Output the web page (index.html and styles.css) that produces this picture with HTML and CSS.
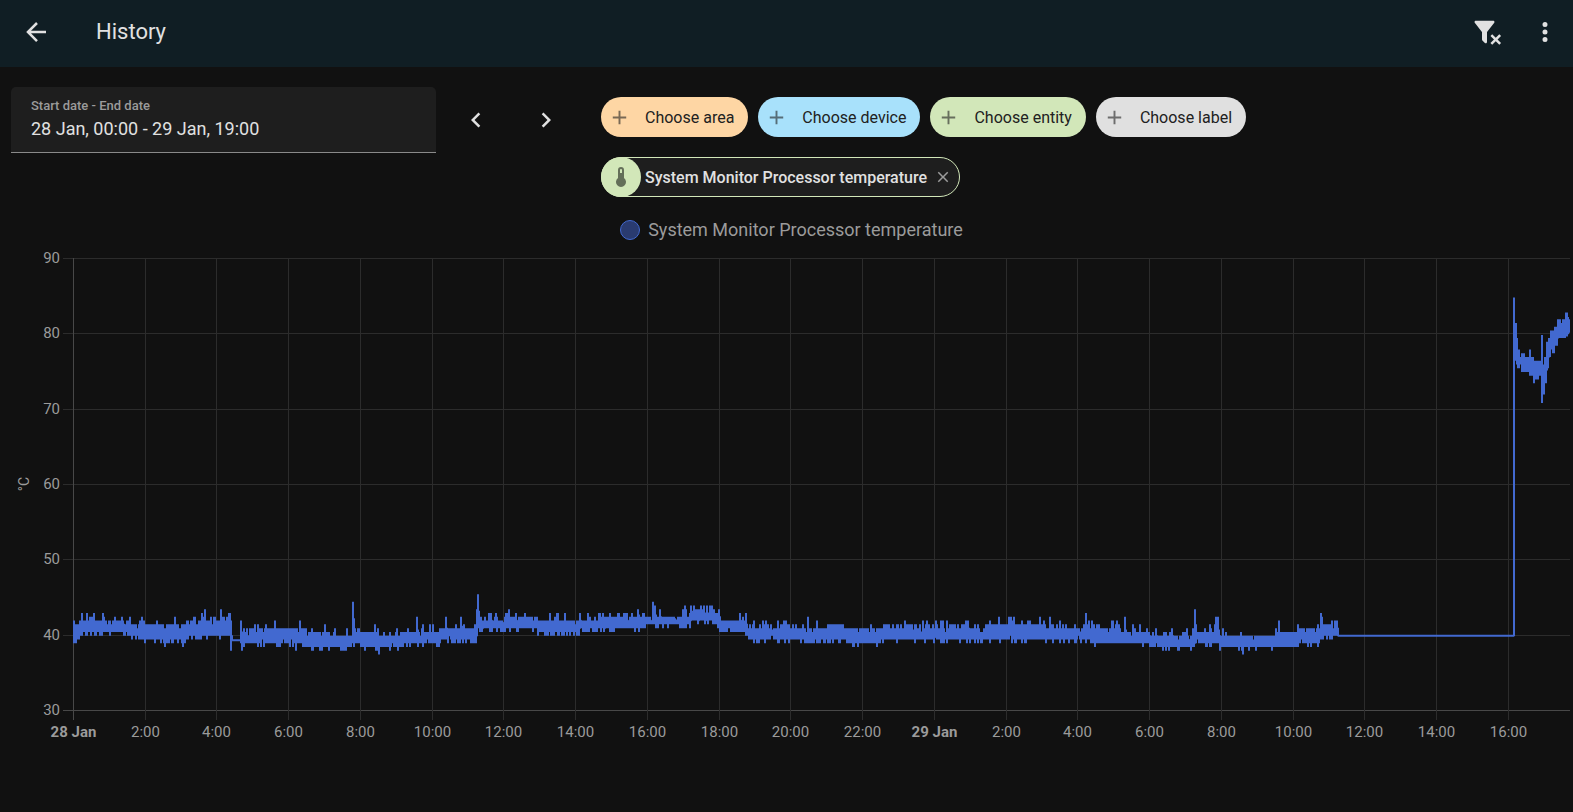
FILE: index.html
```html
<!DOCTYPE html>
<html lang="en">
<head>
<meta charset="utf-8">
<meta name="viewport" content="width=device-width, initial-scale=1">
<title>History</title>
<link rel="stylesheet" href="styles.css">
</head>
<body>
<header class="toolbar">
  <button class="icon-button" type="button" aria-label="Back">
    <svg class="icon" viewBox="0 0 24 24"><path d="M20,11V13H8L13.5,18.5L12.08,19.92L4.16,12L12.08,4.08L13.5,5.5L8,11H20Z"/></svg>
  </button>
  <h1 class="title">History</h1>
  <button class="icon-button" type="button" aria-label="Clear filters">
    <svg class="icon" viewBox="0 0 24 24"><path d="M14.76,20.83L17.6,18L14.76,15.17L16.17,13.76L19,16.57L21.83,13.76L23.24,15.17L20.43,18L23.24,20.83L21.83,22.24L19,19.4L16.17,22.24L14.76,20.83M12,12V19.88C12.04,20.18 11.94,20.5 11.71,20.71C11.32,21.1 10.69,21.1 10.3,20.71L8.29,18.7C8.06,18.47 7.96,18.16 8,17.87V12H7.97L2.21,4.62C1.87,4.19 1.95,3.56 2.38,3.22C2.57,3.08 2.78,3 3,3H17C17.22,3 17.43,3.08 17.62,3.22C18.05,3.56 18.13,4.19 17.79,4.62L12.03,12H12Z"/></svg>
  </button>
  <button class="icon-button" type="button" aria-label="More options">
    <svg class="icon" viewBox="0 0 24 24"><path d="M12,16A2,2 0 0,1 14,18A2,2 0 0,1 12,20A2,2 0 0,1 10,18A2,2 0 0,1 12,16M12,10A2,2 0 0,1 14,12A2,2 0 0,1 12,14A2,2 0 0,1 10,12A2,2 0 0,1 12,10M12,4A2,2 0 0,1 14,6A2,2 0 0,1 12,8A2,2 0 0,1 10,6A2,2 0 0,1 12,4Z"/></svg>
  </button>
</header>
<main>
  <section class="filters">
    <div class="range">
      <div class="field">
        <label class="field-label" for="range">Start date - End date</label>
        <input class="field-input" id="range" type="text" value="28 Jan, 00:00 - 29 Jan, 19:00" readonly>
      </div>
      <button class="step-button" type="button" aria-label="Previous period">
        <svg class="icon" viewBox="0 0 24 24"><path d="M15.41,16.58L10.83,12L15.41,7.41L14,6L8,12L14,18L15.41,16.58Z"/></svg>
      </button>
      <button class="step-button" type="button" aria-label="Next period">
        <svg class="icon" viewBox="0 0 24 24"><path d="M8.59,16.58L13.17,12L8.59,7.41L10,6L16,12L10,18L8.59,16.58Z"/></svg>
      </button>
    </div>
    <div class="targets">
      <div class="chips">
        <button class="chip area" type="button"><svg class="plus" viewBox="0 0 24 24"><path d="M19,13H13V19H11V13H5V11H11V5H13V11H19V13Z"/></svg>Choose area</button>
        <button class="chip device" type="button"><svg class="plus" viewBox="0 0 24 24"><path d="M19,13H13V19H11V13H5V11H11V5H13V11H19V13Z"/></svg>Choose device</button>
        <button class="chip entity" type="button"><svg class="plus" viewBox="0 0 24 24"><path d="M19,13H13V19H11V13H5V11H11V5H13V11H19V13Z"/></svg>Choose entity</button>
        <button class="chip label" type="button"><svg class="plus" viewBox="0 0 24 24"><path d="M19,13H13V19H11V13H5V11H11V5H13V11H19V13Z"/></svg>Choose label</button>
      </div>
      <div class="selected">
        <span class="badge"><svg viewBox="0 0 24 24"><path d="M15 13V5A3 3 0 0 0 9 5V13A5 5 0 1 0 15 13M12 4A1 1 0 0 1 13 5V8H11V5A1 1 0 0 1 12 4Z"/></svg></span>
        <span>System Monitor Processor temperature</span>
        <button class="remove" type="button" aria-label="Remove"><svg viewBox="0 0 24 24"><path d="M19,6.41L17.59,5L12,10.59L6.41,5L5,6.41L10.59,12L5,17.59L6.41,19L12,13.41L17.59,19L19,17.59L13.41,12L19,6.41Z"/></svg></button>
      </div>
    </div>
  </section>
  <section class="history">
    <div class="legend"><span class="dot"></span>System Monitor Processor temperature</div>
    <svg class="chart" id="chart" role="img" aria-label="System Monitor Processor temperature"></svg>
  </section>
</main>
<script src="chart.js"></script>
</body>
</html>
```
FILE: styles.css
```css
* { box-sizing: border-box; }

body {
  margin: 0;
  background: #111;
  color: #e1e1e1;
  font-family: Roboto, "Noto Sans", sans-serif;
}

button {
  border: 0;
  padding: 0;
  background: none;
  color: inherit;
  font: inherit;
  cursor: pointer;
}

svg { display: block; fill: currentColor; }

.toolbar {
  display: flex;
  align-items: center;
  height: 67px;
  padding: 0 0 3px 6px;
  background: #101e24;
}

.icon-button {
  display: grid;
  place-items: center;
  width: 60px;
  height: 60px;
}

.icon { width: 30px; height: 30px; }

.title {
  flex: 1;
  margin: 0;
  padding-left: 30px;
  font-size: 22px;
  font-weight: 400;
  line-height: 30px;
}

.toolbar .icon-button:last-child { width: 56px; }

.filters {
  display: flex;
  gap: 25px;
  padding: 20px 11px 0;
}

.range {
  display: flex;
  align-items: flex-start;
  gap: 10px;
}

.field {
  display: flex;
  flex-direction: column;
  width: 425px;
  height: 66px;
  padding: 11px 20px 0;
  border-bottom: 1px solid #8a8a8a;
  border-radius: 5px 5px 0 0;
  background: #1e1e1e;
}

.field-label {
  color: #9b9b9b;
  font-size: 13px;
  font-weight: 500;
  line-height: 16px;
}

.field-input {
  width: 100%;
  padding: 0;
  border: 0;
  outline: 0;
  background: none;
  color: #e1e1e1;
  font: 400 18px/30px Roboto, "Noto Sans", sans-serif;
}

.step-button {
  display: grid;
  place-items: center;
  width: 60px;
  height: 66px;
}

.targets { padding-top: 10px; }

.chips {
  display: flex;
  flex-wrap: wrap;
  gap: 10px;
}

.chip {
  display: flex;
  align-items: center;
  gap: 14px;
  height: 40px;
  padding: 0 14px 0 7px;
  border-radius: 20px;
  color: #212121;
  font-size: 16px;
}

.plus { width: 23px; height: 23px; opacity: 0.6; }
.area { background: #fed6a4; }
.device { background: #a8e1fb; }
.entity { background: #d2e7b9; }
.label { background: #e0e0e0; }

.selected {
  display: inline-flex;
  align-items: center;
  height: 40px;
  margin-top: 20px;
  border: 1px solid #d2e7b9;
  border-radius: 20px;
  background: #1e1e1e;
  font-size: 16px;
  font-weight: 500;
}

.badge {
  display: grid;
  place-items: center;
  width: 40px;
  height: 40px;
  margin: 0 4px 0 -1px;
  border-radius: 20px;
  background: #d2e7b9;
  color: #646f59;
}

.badge svg { width: 24px; height: 24px; }

.remove {
  display: grid;
  place-items: center;
  width: 32px;
  height: 38px;
  color: #9b9b9b;
}

.remove svg { width: 18px; height: 18px; }

.legend {
  display: flex;
  align-items: center;
  justify-content: center;
  gap: 8px;
  padding: 22px 0 0 10px;
  color: #9b9b9b;
  font-size: 18px;
  line-height: 22px;
}

.dot {
  width: 20px;
  height: 20px;
  border: 1px solid #4269d0;
  border-radius: 50%;
  background: #2a3b70;
}

.chart {
  width: 100%;
  height: 504px;
}

.grid { stroke: #2c2c2c; }
.axis { stroke: #484848; }

.tick {
  fill: #9b9b9b;
  font-size: 15px;
}

.tick-day { font-weight: 700; }

.unit { font-size: 14px; }

.series {
  fill: none;
  stroke: #4269d0;
  stroke-width: 2;
  stroke-linejoin: bevel;
}
```
FILE: chart.js
```js
const NS = "http://www.w3.org/2000/svg";
const TOTAL = 1496;          // samples in the visible range
const PER_TICK = 71.7;       // samples in two hours
const MIN = 30;
const MAX = 90;

// [first sample, high, low, chance of a peak, chance of a dip]
const bands = [
  [0, 41.5, 39.5, 0.1, 0.3], [6, 42, 40.5, 0.15, 0.4], [56, 41.5, 40, 0.2, 0.35],
  [71, 41.5, 39.5, 0.1, 0.25], [113, 41.5, 40, 0.4, 0.35], [128, 42, 40, 0.3, 0.12],
  [158, 39.4, 39.4, 0, 0], [167, 40.5, 39, 0.4, 0.15], [192, 41, 39, 0.15, 0.15],
  [231, 40.5, 38.5, 0.2, 0.1], [256, 40, 38.5, 0.1, 0.15], [280, 41, 39, 0.2, 0.2],
  [287, 40.5, 38.5, 0.1, 0.1], [306, 40, 38.5, 0.2, 0.1], [328, 40.5, 39, 0.2, 0.1],
  [366, 41, 39.5, 0.15, 0.35], [404, 42, 41, 0.35, 0.3], [437, 42.5, 41, 0.05, 0.2],
  [464, 42, 40.5, 0.2, 0.35], [507, 42, 41, 0.4, 0.2], [537, 42.5, 41, 0.3, 0.1],
  [571, 42.5, 41.5, 0.15, 0.2], [617, 43, 42, 0.3, 0.15], [640, 42.5, 41.5, 0.2, 0.2],
  [646, 42, 40.5, 0.2, 0.2], [672, 41, 39.5, 0.3, 0.15], [731, 41, 39, 0.15, 0.1],
  [754, 41.5, 39.5, 0.1, 0.15], [773, 41, 39, 0.1, 0.15], [807, 41, 39.5, 0.4, 0.15],
  [867, 41, 39.5, 0.3, 0.25], [912, 41.5, 39.5, 0.15, 0.1], [968, 41, 39.5, 0.25, 0.2],
  [1017, 41, 39, 0.25, 0.1], [1047, 40.5, 39, 0.1, 0.2], [1076, 40, 38.5, 0.2, 0.1],
  [1122, 40.5, 39, 0.2, 0.2], [1146, 40, 38.5, 0.1, 0.15], [1204, 40.5, 38.5, 0.1, 0],
  [1225, 41, 39, 0.05, 0.1], [1247, 41.5, 40, 0.2, 0.2], [1265, 40, 40, 0, 0]
];

// [sample, high, low]
const events = [
  [8, 43, 40], [68, 42.5, 40], [91, 41, 38.5], [109, 41, 38.5], [131, 43.5, 40],
  [147, 43.5, 41], [155, 43, 40], [157, 42, 38], [167, 42, 39], [168, 40, 38],
  [222, 41, 38], [226, 42, 39], [279, 44.5, 40], [305, 40, 37.5], [343, 42.5, 39],
  [372, 42.5, 39.5], [387, 42.5, 40], [403, 43.5, 41], [404, 45.5, 41], [435, 43.5, 41],
  [484, 43, 40], [564, 43.5, 42], [579, 44.5, 41.5], [581, 44, 41.5], [611, 44, 41],
  [620, 44, 42], [630, 44, 42], [638, 44, 42], [666, 43, 41], [672, 43, 40],
  [734, 42.5, 39], [937, 42.5, 40], [940, 42.5, 40], [976, 42.5, 40], [1012, 43, 39],
  [1051, 42.5, 39], [1121, 43.5, 39], [1142, 42.5, 39], [1144, 42.5, 39],
  [1169, 40, 37.5], [1205, 42, 38.5], [1247, 43, 39.5], [1248, 42.5, 39.5],
  [1261, 42, 40], [1263, 42, 40]
];

// [sample, high, low] after the restart
const tail = [
  [1440, 84.9, 40], [1441, 81.5, 76.5], [1443, 79.5, 76], [1444, 78, 75.5],
  [1446, 77, 76], [1448, 77.5, 75], [1456, 78, 74.5], [1457, 77, 74.5],
  [1460, 76.5, 73.5], [1461, 76.5, 74], [1463, 76.5, 74], [1465, 76.5, 74.5],
  [1467, 75.5, 74.9], [1468, 79.9, 70.9], [1470, 76, 72], [1471, 77, 73.5],
  [1473, 79, 75.5], [1475, 79.5, 77], [1477, 80.5, 78], [1479, 80.5, 77.5],
  [1481, 81, 78.5], [1484, 82, 79.5], [1486, 82, 79.5],
  [1492, 82.9, 79.7], [1494, 82.3, 80], [1495, 82, 80.2]
];

function buildSamples() {
  const points = [];
  const peaks = new Map(events.map(([at, high, low]) => [at, [high, low]]));
  let seed = 28;
  const random = () => {
    seed = (seed * 16807) % 2147483647;
    return seed / 2147483647;
  };
  let band = 0;
  for (let at = 0; at <= 1265; at++) {
    while (band + 1 < bands.length && bands[band + 1][0] <= at) band++;
    let [, high, low, up, down] = bands[band];
    if (peaks.has(at)) {
      [high, low] = peaks.get(at);
    } else if (high > low) {
      if (random() < up) high += random() < 0.3 ? 1 : 0.5;
      else if (random() < 0.25) high -= 0.5;
      if (random() < down) low -= 0.5;
      else if (random() < 0.2) low += 0.5;
    }
    points.push([at, high, low]);
  }
  tail.forEach(([at, high, low], i) => {
    const end = i + 1 < tail.length ? tail[i + 1][0] : at + 1;
    points.push([at, high, low]);
    for (let next = at + 1; next < end; next++) {
      if (at === 1440 || at === 1468) break;
      points.push([next, high - (random() < 0.3 ? 0.5 : 0), low]);
    }
  });
  return points;
}

const samples = buildSamples();
const chart = document.getElementById("chart");

function add(name, attributes, text) {
  const node = document.createElementNS(NS, name);
  for (const key in attributes) node.setAttribute(key, attributes[key]);
  if (text) node.textContent = text;
  chart.append(node);
}

function draw() {
  chart.replaceChildren();
  const left = 73;
  const right = chart.clientWidth - 3;
  const top = 17;
  const bottom = chart.clientHeight - 35;
  const x = at => left + 1 + at * (right - left - 1) / TOTAL;
  const y = value => bottom + 1 - (value - MIN) * (bottom - top) / (MAX - MIN);
  const crisp = value => Math.round(value) + 0.5;

  for (let value = MIN; value <= MAX; value += 10) {
    const line = crisp(y(value) - 1);
    add("path", { class: value === MIN ? "axis" : "grid", d: `M${left - 10} ${line}H${right}` });
    add("text", { class: "tick", x: left - 13, y: line + 4, "text-anchor": "end" }, String(value));
  }
  for (let i = 0; i <= 20; i++) {
    const line = crisp(left + i * PER_TICK * (right - left) / TOTAL);
    const hour = (i * 2) % 24;
    const day = hour === 0;
    add("path", { class: i === 0 ? "axis" : "grid", d: `M${line} ${top}V${bottom + 10}` });
    add("text", { class: day ? "tick tick-day" : "tick", x: line, y: bottom + 27, "text-anchor": "middle" },
      day ? (i === 0 ? "28 Jan" : "29 Jan") : `${hour}:00`);
  }
  const middle = (top + bottom) / 2;
  add("text", { class: "tick unit", "text-anchor": "middle", transform: `translate(29 ${middle}) rotate(-90)` }, "°C");

  let path = "";
  samples.forEach(([at, high, low], i) => {
    path += `${i ? "H" : `M${x(at)} ${y(low)}H`}${x(at)}V${y(high)}V${y(low)}`;
    if (at === 1440) path += `V${y(78)}`;
    else if (high > low && at !== 1264) path += `V${y((high + low) / 2)}`;
  });
  add("path", { class: "series", d: path });
}

draw();
window.addEventListener("resize", draw);
```
